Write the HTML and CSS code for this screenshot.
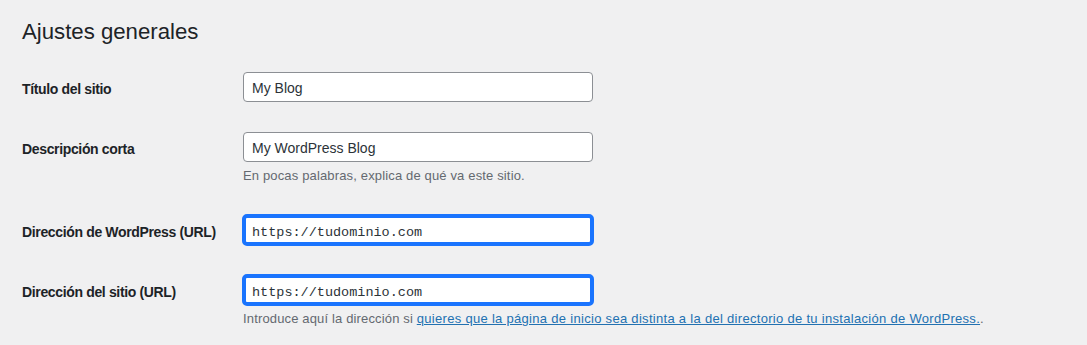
FILE: index.html
```html
<!DOCTYPE html>
<html lang="es">
<head>
<meta charset="utf-8">
<title>Ajustes generales</title>
<link rel="stylesheet" href="styles.css">
</head>
<body>
<div class="wrap">
  <h1 class="page-title">Ajustes generales</h1>
  <table class="form-table">
    <tbody>
      <tr>
        <th class="label-cell"><label for="blogname">Título del sitio</label></th>
        <td class="field-cell"><input id="blogname" class="text-input" type="text" value="My Blog"></td>
      </tr>
      <tr>
        <th class="label-cell"><label for="blogdescription">Descripción corta</label></th>
        <td class="field-cell">
          <input id="blogdescription" class="text-input" type="text" value="My WordPress Blog">
          <p class="description">En pocas palabras, explica de qué va este sitio.</p>
        </td>
      </tr>
      <tr>
        <th class="label-cell"><label for="siteurl">Dirección de WordPress (URL)</label></th>
        <td class="field-cell"><input id="siteurl" class="text-input code highlighted" type="url" value="https://tudominio.com"></td>
      </tr>
      <tr>
        <th class="label-cell"><label for="home">Dirección del sitio (URL)</label></th>
        <td class="field-cell">
          <input id="home" class="text-input code highlighted" type="url" value="https://tudominio.com">
          <p class="description">Introduce aquí la dirección si <a class="link" href="#">quieres que la página de inicio sea distinta a la del directorio de tu instalación de WordPress.</a>.</p>
        </td>
      </tr>
    </tbody>
  </table>
</div>
</body>
</html>
```

FILE: styles.css
```css
html, body {
  margin: 0;
  padding: 0;
  background: #f0f0f1;
}

body {
  font-family: "Liberation Sans", Arial, sans-serif;
  color: #1d2327;
  font-size: 14px;
}

.wrap {
  padding: 9px 20px 0 22px;
}

.page-title {
  margin: 0;
  padding: 9px 0 4px;
  font-size: 22.2px;
  font-weight: 400;
  line-height: 1.3;
  color: #1d2327;
}

.form-table {
  border-collapse: collapse;
  margin-top: 6px;
}

.label-cell {
  width: 221px;
  padding: 23px 0 0 0;
  text-align: left;
  vertical-align: top;
  font-size: 14px;
  font-weight: 700;
  line-height: 18px;
  color: #1d2327;
  letter-spacing: -0.35px;
}

.field-cell {
  padding: 15px 0;
  vertical-align: top;
}

.text-input {
  display: block;
  box-sizing: border-box;
  width: 350px;
  height: 30px;
  margin: 0;
  padding: 3px 8px 0;
  border: 1px solid #8c8f94;
  border-radius: 4px;
  background: #fff;
  font-family: "Liberation Sans", Arial, sans-serif;
  font-size: 14px;
  color: #2c3338;
  outline: none;
}

.code {
  font-family: "Liberation Mono", "DejaVu Sans Mono", monospace;
  font-size: 13.5px;
  padding-top: 5px;
  color: #2c3338;
}

.highlighted {
  outline: 4px solid #1a74fe;
  outline-offset: -3px;
}

.description {
  margin: 4px 0 0;
  font-size: 13px;
  line-height: 19.5px;
  letter-spacing: 0.15px;
  color: #646970;
}

.link {
  color: #2271b1;
  text-decoration: underline;
  letter-spacing: 0.3px;
}
```
